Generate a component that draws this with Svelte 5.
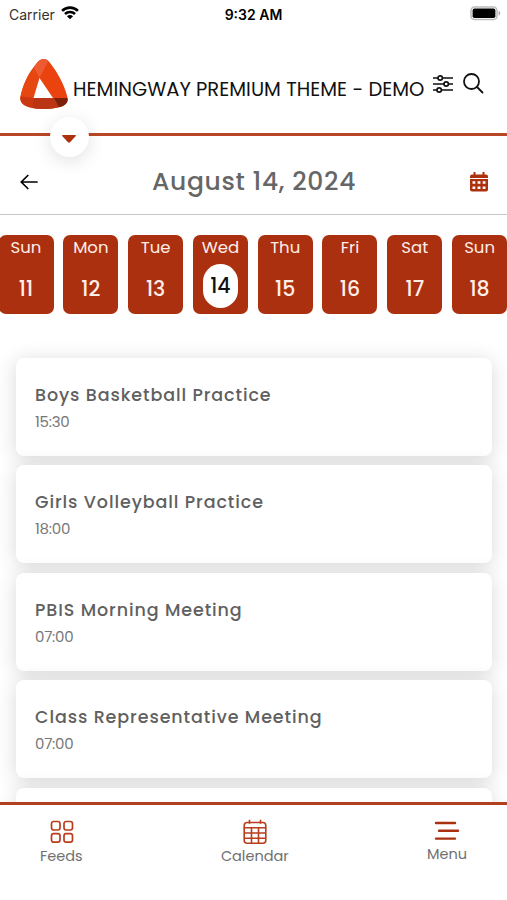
<script lang="ts">
  type Day = { name: string; date: number };
  type CalendarEvent = { title: string; time: string };

  const days: Day[] = [
    { name: 'Sun', date: 11 },
    { name: 'Mon', date: 12 },
    { name: 'Tue', date: 13 },
    { name: 'Wed', date: 14 },
    { name: 'Thu', date: 15 },
    { name: 'Fri', date: 16 },
    { name: 'Sat', date: 17 },
    { name: 'Sun', date: 18 }
  ];

  const events: CalendarEvent[] = [
    { title: 'Boys Basketball Practice', time: '15:30' },
    { title: 'Girls Volleyball Practice', time: '18:00' },
    { title: 'PBIS Morning Meeting', time: '07:00' },
    { title: 'Class Representative Meeting', time: '07:00' }
  ];

  let selected = $state(14);
</script>

<div class="screen">
  <div class="status">
    <span class="carrier">
      Carrier
      <svg width="18" height="14" viewBox="0 0 20 15">
        <g fill="none" stroke="#000" stroke-width="2.8">
          <path d="M1.200 5.200a12.400 12.400 0 0 1 17.600 0" />
          <path d="M4.400 8.600a7.900 7.900 0 0 1 11.200 0" />
        </g>
        <path d="M6.600 11a4.800 4.800 0 0 1 6.800 0L10 14.500z" />
      </svg>
    </span>
    <span class="clock">9:32 AM</span>
    <svg class="battery" width="31" height="15" viewBox="0 0 31 15">
      <rect x="1" y="1" width="26" height="12.600" rx="3.600" fill="#fff" stroke="#bbb" stroke-width="1.500" />
      <rect x="2.600" y="2.600" width="22.800" height="9.400" rx="1.800" />
      <path d="M28.600 5c2.200.5 2.200 4.200 0 4.700z" fill="#aaa" />
    </svg>
  </div>

  <header>
    <svg class="logo" width="50" height="52" viewBox="0 0 50 52">
      <path d="M24.500 1C27.500 1 29.500 2.500 31.500 5.500C39 15 45.500 27 48.500 39.500C50 46 43 51 24.500 51C7 51 0 46 1.500 38.500C4 26 10 14.500 17.500 5.500C20 2.500 21.500 1 24.500 1Z" fill="#ea4310" />
      <path d="M17.500 5.500C20 2.500 21.500 1 24.500 1C26.500 1 28 1.700 29.300 2.900L20.500 20L14.500 9.500Z" fill="#ee5a32" />
      <path d="M14.500 9.500L20.500 20L14.500 40L1.500 38.500C4 27 8.500 17 14.500 9.500Z" fill="#e6460f" />
      <path d="M1.500 38.500L14.500 40L13 49.800C4 47.800 .5 44 1.500 38.500Z" fill="#c93810" />
      <path d="M14.500 40H36L40 49C34 51 20 51.800 13 49.800Z" fill="#b93513" />
      <path d="M35 40H48.500C49.500 45 46 48 40 49.300Z" fill="#7c200b" />
      <path d="M20.500 20L34 40H14.500Z" fill="#fff" />
    </svg>
    <h1>HEMINGWAY PREMIUM THEME - DEMO</h1>
    <svg class="filter" width="20" height="20" viewBox="0 0 20 20" fill="none" stroke="#111" stroke-width="1.700">
      <path d="M0 4h5M9.500 4H20M0 10h11M15.500 10H20M0 16h4M8.500 16H20" />
      <circle cx="7.200" cy="4" r="2.200" />
      <circle cx="13.200" cy="10" r="2.200" />
      <circle cx="6.200" cy="16" r="2.200" />
    </svg>
    <svg class="search" width="21" height="21" viewBox="0 0 21 21" fill="none" stroke="#111" stroke-width="1.800" stroke-linecap="round">
      <circle cx="8.500" cy="8.500" r="7.500" />
      <path d="M14 14l5.500 5.500" />
    </svg>
    <button class="dropdown" aria-label="Expand">
      <svg width="16" height="10" viewBox="0 0 16 10">
        <path d="M1.800 1h12.400q1 0 .6 1L9 8.300q-1 .8-2 0L1.200 2Q.8 1 1.800 1z" fill="#ae310f" />
      </svg>
    </button>
  </header>

  <div class="date-bar">
    <svg width="18" height="16" viewBox="0 0 18 16" fill="none" stroke="#000" stroke-width="1.700" stroke-linecap="round" stroke-linejoin="round">
      <path d="M17 8H1.200M7.800 1.500L1.200 8l6.600 6.500" />
    </svg>
    <h2>August 14, 2024</h2>
    <svg width="18" height="20" viewBox="0 0 18 20">
      <path d="M3.500 0h2v2.500h7V0h2v2.500H16q2 0 2 2V6H0V4.500q0-2 2-2h1.500z" fill="#ae310f" />
      <path d="M0 7h18v10.500q0 2-2 2H2q-2 0-2-2z" fill="#ae310f" />
      <path d="M2.500 9.200h2.800v2.600H2.500zM7.600 9.200h2.800v2.600H7.600zM12.700 9.200h2.800v2.600h-2.800zM2.500 14.400h2.800V17H2.500zM7.600 14.400h2.800V17H7.600zM12.700 14.400h2.800V17h-2.800z" fill="#fff" />
    </svg>
  </div>

  <div class="days">
    {#each days as day}
      <button class="day" class:active={day.date === selected} onclick={() => (selected = day.date)}>
        <span class="name">{day.name}</span>
        <span class="number">{day.date}</span>
      </button>
    {/each}
  </div>

  <main>
    {#each events as event}
      <article>
        <h3>{event.title}</h3>
        <p>{event.time}</p>
      </article>
    {/each}
    <article></article>
  </main>

  <nav>
    <a href="#feeds">
      <svg class="feeds" width="24" height="24" viewBox="0 0 24 24" fill="none" stroke="#b83d1d" stroke-width="1.700">
        <rect x="1.500" y="1.500" width="8.500" height="8.500" rx="2.200" />
        <rect x="14" y="1.500" width="8.500" height="8.500" rx="2.200" />
        <rect x="1.500" y="13.700" width="8.500" height="8.500" rx="2.200" />
        <rect x="14" y="13.700" width="8.500" height="8.500" rx="2.200" />
      </svg>
      <span>Feeds</span>
    </a>
    <a href="#calendar">
      <svg width="24" height="26" viewBox="0 0 24 26" fill="none" stroke="#b83d1d" stroke-width="1.600">
        <rect x="1.200" y="3.500" width="21.600" height="20.800" rx="3" />
        <path d="M6.500 .8v4M17.500 .8v4M1.200 8.700h21.600M1.200 14h21.600M1.200 19.200h21.600M8.500 8.700v15.600M15.500 8.700v15.600" />
      </svg>
      <span>Calendar</span>
    </a>
    <a href="#menu" class="menu">
      <svg width="26" height="20" viewBox="0 0 26 20" fill="none" stroke="#a9310f" stroke-width="2.400" stroke-linecap="round">
        <path d="M2 2h19M5 9.800h19M2 17.600h19" />
      </svg>
      <span>Menu</span>
    </a>
  </nav>
</div>

<style>
  :global(body) {
    margin: 0;
    background: #fff;
  }

  .screen {
    display: flex;
    flex-direction: column;
    width: 507px;
    height: 900px;
    overflow: hidden;
    background: #fff;
    font-family: Poppins, Inter, 'Open Sans', sans-serif;
  }

  .screen * {
    box-sizing: border-box;
  }

  h1,
  h2,
  h3,
  p {
    margin: 0;
    white-space: nowrap;
  }

  button {
    border: 0;
    padding: 0;
    font-family: inherit;
  }

  svg {
    display: block;
    flex: none;
  }

  .status {
    display: grid;
    grid-template-columns: 1fr auto 1fr;
    align-items: center;
    height: 28px;
    padding: 0 6px 0 9px;
    font-family: Inter, sans-serif;
    font-size: 14px;
    color: #000;
  }

  .carrier {
    display: flex;
    align-items: center;
    gap: 6px;
    color: #333;
  }

  .carrier svg {
    margin-top: -3px;
  }

  .clock {
    margin-left: -3px;
    font-weight: 600;
  }

  .battery {
    justify-self: end;
    margin-top: -1px;
  }

  header {
    position: relative;
    display: flex;
    align-items: center;
    height: 108px;
    padding: 6px 0 0 19px;
    border-bottom: 3px solid #b94726;
    flex: none;
  }

  h1 {
    width: 360px;
    margin-top: 11px;
    padding-left: 4px;
    font-size: 19.500px;
    font-weight: 400;
    letter-spacing: 0.030px;
    color: #111;
  }

  .filter {
    margin-left: 4px;
  }

  .search {
    margin-left: 10px;
  }

  .dropdown {
    position: absolute;
    top: 89px;
    left: 50px;
    display: flex;
    align-items: center;
    justify-content: center;
    width: 39px;
    height: 40px;
    padding: 3px 1px 0 0;
    border-radius: 50%;
    background: #fff;
    box-shadow: 0 4px 18px rgba(0, 0, 0, 0.12);
  }

  .date-bar {
    display: flex;
    align-items: center;
    justify-content: space-between;
    height: 79px;
    padding: 14px 19px 0 20px;
    border-bottom: 1px solid #c8c8c8;
    flex: none;
  }

  h2 {
    font-size: 25px;
    font-weight: 500;
    letter-spacing: 0.660px;
    color: #666;
  }

  .days {
    display: flex;
    gap: 9.800px;
    margin: 20px 0 0 -1.500px;
    flex: none;
  }

  .day {
    display: flex;
    flex-direction: column;
    align-items: center;
    flex: none;
    width: 55px;
    height: 79px;
    border-radius: 7px;
    background: #ab300f;
    color: #ffeee8;
  }

  .name {
    height: 29px;
    font-size: 16.500px;
    line-height: 25px;
  }

  .number {
    width: 35px;
    height: 44px;
    border-radius: 18px;
    font-size: 20.500px;
    font-weight: 500;
    line-height: 50px;
  }

  .active .number {
    background: #fff;
    color: #111;
    line-height: 44px;
  }

  main {
    display: flex;
    flex: 1;
    flex-direction: column;
    gap: 9.700px;
    min-height: 0;
    margin-top: 14px;
    padding: 30px 15px 0 15.500px;
    overflow: hidden;
  }

  article {
    flex: none;
    height: 97.800px;
    padding: 24px 19.500px;
    border-radius: 8px;
    background: #fff;
    box-shadow: 0 3px 20px rgba(40, 40, 50, 0.180);
  }

  h3 {
    font-size: 17.500px;
    font-weight: 500;
    line-height: 26px;
    letter-spacing: 0.900px;
    color: #606060;
  }

  p {
    font-size: 15px;
    line-height: 27px;
    letter-spacing: -0.250px;
    color: #777;
  }

  nav {
    display: flex;
    justify-content: space-between;
    height: 98px;
    padding: 14px 40px 0;
    border-top: 3px solid #b23f1e;
    background: #fff;
    flex: none;
    position: relative;
  }

  nav a {
    display: flex;
    flex-direction: column;
    align-items: center;
    font-size: 14.500px;
    color: #707070;
    text-decoration: none;
  }

  nav svg {
    height: 26px;
  }

  .feeds {
    margin-left: 1px;
  }

  nav span {
    line-height: 22px;
  }

  .menu svg {
    height: 24px;
  }
</style>
